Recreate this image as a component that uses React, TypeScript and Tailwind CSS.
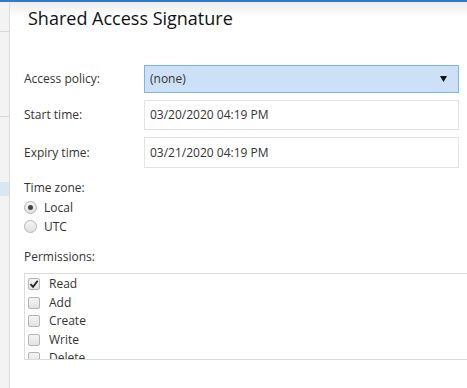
const permissions = [
  { name: 'Read', checked: true },
  { name: 'Add', checked: false },
  { name: 'Create', checked: false },
  { name: 'Write', checked: false },
  { name: 'Delete', checked: false },
];

const Checkbox = ({ checked }: { checked: boolean }) => (
  <span className="w-[12px] h-[12px] rounded-[2px] border border-[#b5b5b5] bg-gradient-to-b from-[#f4f4f4] to-[#e2e2e2] flex items-center justify-center shrink-0">
    {checked && (
      <svg width="10" height="10" viewBox="0 0 10 10">
        <path d="M1.5 5.2 L4 7.8 L8.7 1.8" fill="none" stroke="#222" strokeWidth="1.8" />
      </svg>
    )}
  </span>
);

const Radio = ({ checked }: { checked: boolean }) => (
  <span className="w-[13px] h-[13px] rounded-full border border-[#b5b5b5] bg-gradient-to-b from-[#f4f4f4] to-[#e0e0e0] flex items-center justify-center shrink-0">
    {checked && <span className="w-[5px] h-[5px] rounded-full bg-[#444]" />}
  </span>
);

const App = () => {
  return (
    <div
      className="w-[467px] h-[388px] overflow-hidden bg-white flex flex-col text-[#333] text-[12px]"
      style={{ fontFamily: '"Open Sans", "Noto Sans", sans-serif' }}
    >
      <div className="h-[2px] bg-[#2b7bd0] shrink-0" />
      <div className="flex flex-1">
        {/* background window strip */}
        <div className="w-[10px] bg-[#f3f3f3] border-r border-[#dcdcdc] flex flex-col shrink-0">
          <div className="h-[30px] border-b border-[#d8d8d8]" />
          <div className="h-[85px] border-b border-[#d8d8d8]" />
          <div className="h-[25px]" />
          <div className="h-[14px] bg-[#dbe6f3] mt-[40px]" />
        </div>

        {/* dialog */}
        <div className="flex-1 flex flex-col bg-gradient-to-b from-[#ececec] via-white to-white bg-[length:100%_30px] bg-no-repeat">
          <h1 className="text-[18px] font-medium leading-[26px] text-[#111] pl-[18px] pt-[3px]">
            Shared Access Signature
          </h1>

          <div className="pl-[14px] pr-[8px] mt-[34px] flex flex-col">
            <div className="flex items-center h-[28px]">
              <span className="w-[120px]">Access policy:</span>
              <div className="flex-1 h-[28px] bg-[#cde1f6] border border-[#7db4ec] flex items-center justify-between pl-[5px] pr-[11px]">
                <span>(none)</span>
                <svg width="7" height="6" viewBox="0 0 7 6">
                  <path d="M0 0 H7 L3.5 6 Z" fill="#111" />
                </svg>
              </div>
            </div>

            <div className="flex items-center h-[30px] mt-[7px]">
              <span className="w-[120px]">Start time:</span>
              <div className="flex-1 h-[30px] border border-[#e3e3e3] flex items-center pl-[5px]">
                03/20/2020 04:19 PM
              </div>
            </div>

            <div className="flex items-center h-[31px] mt-[7px]">
              <span className="w-[120px]">Expiry time:</span>
              <div className="flex-1 h-[31px] border border-[#e3e3e3] flex items-center pl-[5px]">
                03/21/2020 04:19 PM
              </div>
            </div>

            <div className="mt-[11px] leading-[18px]">Time zone:</div>
            <div className="flex items-center gap-[7px] h-[19px] mt-[1px]">
              <Radio checked />
              <span>Local</span>
            </div>
            <div className="flex items-center gap-[7px] h-[19px]">
              <Radio checked={false} />
              <span>UTC</span>
            </div>

            <div className="mt-[12px] leading-[18px]">Permissions:</div>
            <div className="mt-[7px] -mr-[20px] h-[87px] border border-[#dcdce0] overflow-hidden pl-[3px] pt-[1px]">
              {permissions.map((p) => (
                <div key={p.name} className="flex items-center gap-[9px] h-[18.5px]">
                  <Checkbox checked={p.checked} />
                  <span>{p.name}</span>
                </div>
              ))}
            </div>
          </div>
        </div>
      </div>
    </div>
  );
};

export default App;
